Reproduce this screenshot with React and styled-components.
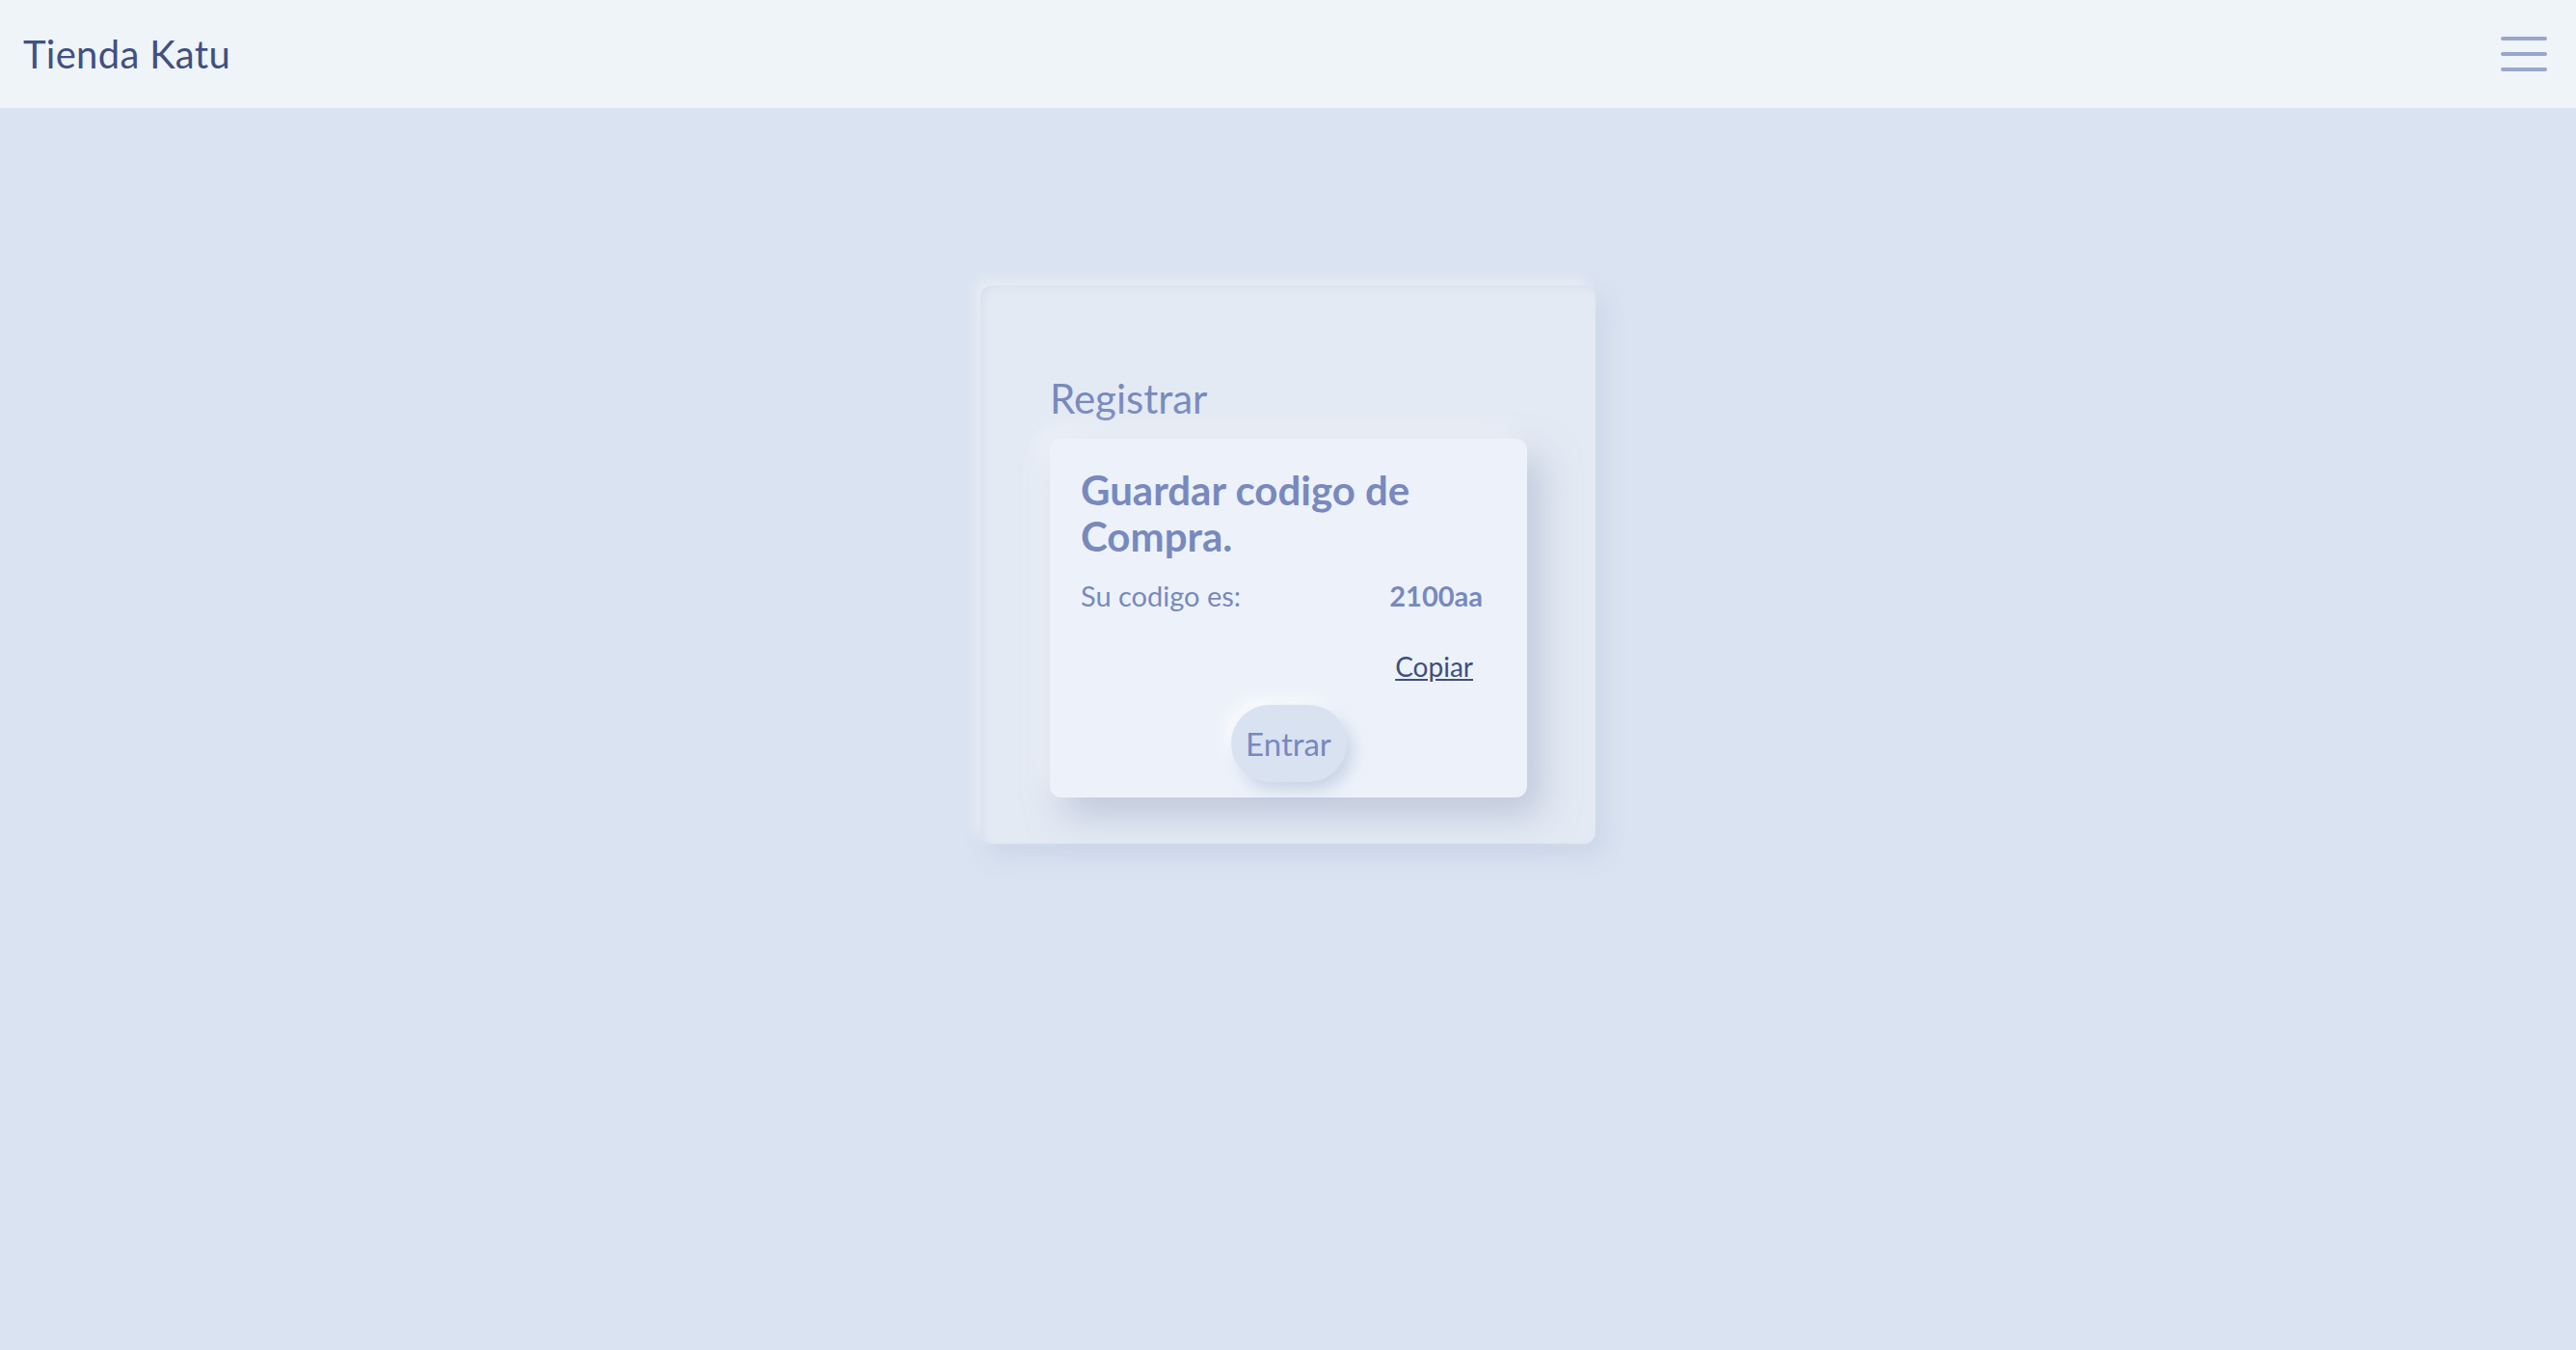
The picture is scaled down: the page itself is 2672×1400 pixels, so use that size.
import React from 'react';
import styled, { createGlobalStyle } from 'styled-components';

//  STYLE
const GlobalStyle = createGlobalStyle`
  * {
    box-sizing: border-box;
  }
  body {
    margin: 0;
    background: #dae3f1;
    font-family: Lato, 'Noto Sans', sans-serif;
  }
`;

export const Page = styled.div`
  display: flex;
  flex-direction: column;
  min-height: 1400px;
  background: #dae3f1;
`;

export const NavBar = styled.header`
  display: flex;
  flex-direction: row;
  justify-content: space-between;
  align-items: center;

  height: 112px;
  padding: 0px 24px;
  background: #eff4f9;
`;

export const Brand = styled.div`
  font-size: 40px;
  color: #415082;
  letter-spacing: 0.3px;
`;

export const Burger = styled.button`
  display: flex;
  flex-direction: column;
  justify-content: space-between;

  width: 48px;
  height: 36px;
  padding: 0;
  margin-right: 6px;
  border: none;
  background: none;
  cursor: pointer;
`;

export const BurgerLine = styled.span`
  display: block;
  width: 100%;
  height: 4px;
  border-radius: 2px;
  background: #9aa6cc;
`;

export const Main = styled.main`
  display: flex;
  flex-direction: row;
  justify-content: center;
  padding-top: 184px;
`;

export const Card = styled.section`
  display: flex;
  flex-direction: column;

  width: 638px;
  padding: 93px 71px 48px 72px;
  border-radius: 12px;
  background: #e3eaf4;
  box-shadow: -6px -6px 14px rgba(255, 255, 255, 0.45),
    8px 12px 26px rgba(180, 195, 220, 0.45),
    inset 3px 3px 6px rgba(200, 210, 228, 0.35);
`;

export const CardTitle = styled.h2`
  margin: 0 0 18px 0;
  font-size: 42px;
  font-weight: 400;
  line-height: 48px;
  color: #7889be;
`;

export const Modal = styled.div`
  display: flex;
  flex-direction: column;

  padding: 29px 46px 16px 32px;
  border-radius: 12px;
  background: #edf2fa;
  box-shadow: 14px 18px 38px rgba(160, 172, 196, 0.55),
    -10px -10px 28px rgba(255, 255, 255, 0.5);
`;

export const ModalTitle = styled.h3`
  margin: 0 0 20px 0;
  font-size: 42px;
  font-weight: 700;
  line-height: 48px;
  color: #7889be;
`;

export const CodeRow = styled.div`
  display: flex;
  flex-direction: row;
  justify-content: space-between;
  align-items: baseline;
`;

export const CodeLabel = styled.span`
  font-size: 29px;
  color: #7889be;
`;

export const CodeValue = styled.span`
  font-size: 29px;
  font-weight: 700;
  color: #7889be;
`;

export const CopyRow = styled.div`
  display: flex;
  flex-direction: row;
  justify-content: flex-end;
  padding: 40px 10px 0 0;
`;

export const CopyLink = styled.a`
  font-size: 28px;
  line-height: 1.2;
  color: #3f4f80;
  text-decoration: underline;
  cursor: pointer;
`;

export const BtnRow = styled.div`
  display: flex;
  flex-direction: row;
  justify-content: center;
  padding: 22px 0 0 14px;
`;

export const EnterBtn = styled.button`
  width: 120px;
  height: 80px;
  border: none;
  border-radius: 40px;
  background: #d9e2f1;
  font-family: Lato, 'Noto Sans', sans-serif;
  font-size: 33px;
  color: #7889be;
  box-shadow: 6px 8px 16px rgba(170, 185, 212, 0.55),
    -6px -6px 16px rgba(255, 255, 255, 0.8);
  cursor: pointer;
`;

//  MAIN
const App = () => {
  return (
    <Page>
      <GlobalStyle />
      <NavBar>
        <Brand>Tienda Katu</Brand>
        <Burger aria-label='menu'>
          <BurgerLine />
          <BurgerLine />
          <BurgerLine />
        </Burger>
      </NavBar>
      <Main>
        <Card>
          <CardTitle>Registrar</CardTitle>
          <Modal>
            <ModalTitle>
              Guardar codigo de
              <br />
              Compra.
            </ModalTitle>
            <CodeRow>
              <CodeLabel>Su codigo es:</CodeLabel>
              <CodeValue>2100aa</CodeValue>
            </CodeRow>
            <CopyRow>
              <CopyLink>Copiar</CopyLink>
            </CopyRow>
            <BtnRow>
              <EnterBtn>Entrar</EnterBtn>
            </BtnRow>
          </Modal>
        </Card>
      </Main>
    </Page>
  );
};

export default App;
